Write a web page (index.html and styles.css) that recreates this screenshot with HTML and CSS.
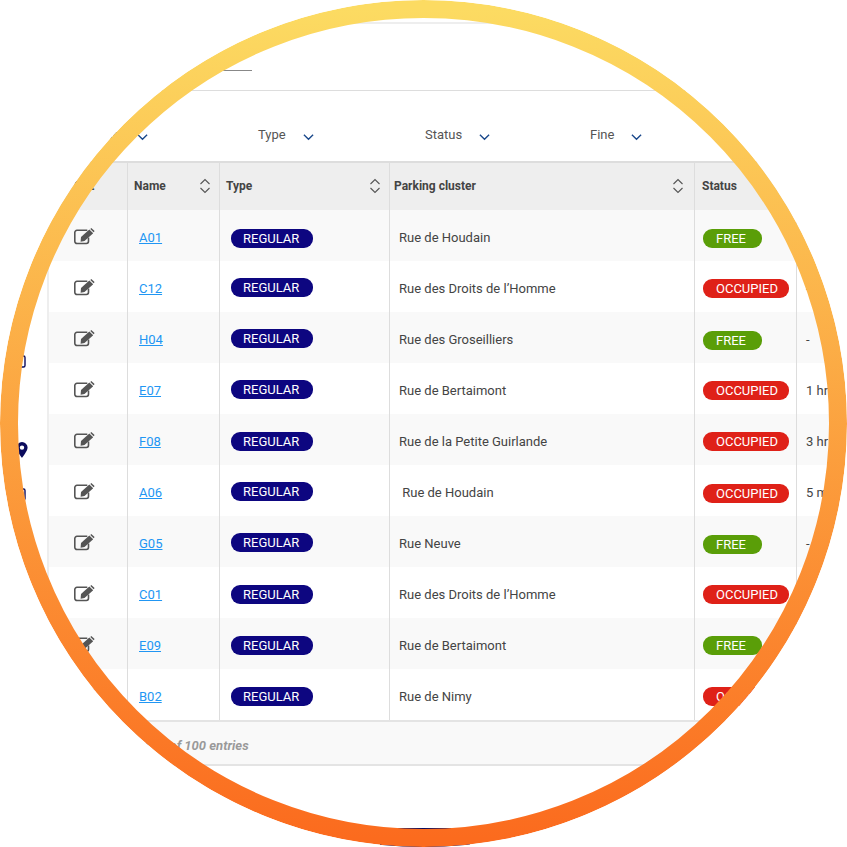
FILE: index.html
```html
<!DOCTYPE html>
<html lang="en">
<head>
  <meta charset="UTF-8" />
  <title>Parking spots</title>
  <link rel="stylesheet" href="styles.css">
</head>
<body>

  <div class="lens">
    <div class="app">

      <!-- Side menu -->
      <aside class="side-nav">
        <svg class="nav-icon nav-first" viewBox="0 0 12 14"><rect x="1" y="2" width="10" height="11" rx="1.5" fill="none" stroke="#0b0b5c" stroke-width="1.4"/><path d="M4 6h4M4 9h4" stroke="#0b0b5c" stroke-width="1.2"/></svg>
        <svg class="nav-icon nav-pin" viewBox="0 0 12 16"><path fill-rule="evenodd" fill="#0b0b5c" d="M6 0a5.6 5.6 0 0 0-5.6 5.6C.4 9.2 6 16 6 16s5.6-6.800 5.600-10.400A5.600 5.600 0 0 0 6 0zm0 3.400a2.200 2.200 0 1 1 0 4.400 2.200 2.200 0 0 1 0-4.400z"/></svg>
        <svg class="nav-icon nav-last" viewBox="0 0 12 14"><rect x="1" y="2" width="10" height="11" rx="1.5" fill="none" stroke="#0b0b5c" stroke-width="1.4"/></svg>
      </aside>

      <main class="content">
        <div class="top-line"></div>
        <div class="tabs"><span class="tab-active"></span></div>

        <div class="filters">
          <div class="filter">Name <svg class="chevron" viewBox="0 0 12 8"><path d="M1 1.500l5 5 5-5"/></svg></div>
          <div class="filter">Type <svg class="chevron" viewBox="0 0 12 8"><path d="M1 1.500l5 5 5-5"/></svg></div>
          <div class="filter">Status <svg class="chevron" viewBox="0 0 12 8"><path d="M1 1.500l5 5 5-5"/></svg></div>
          <div class="filter">Fine <svg class="chevron" viewBox="0 0 12 8"><path d="M1 1.500l5 5 5-5"/></svg></div>
        </div>

        <table class="spots">
          <colgroup>
            <col class="col-edit"><col class="col-name"><col class="col-type"><col class="col-cluster"><col class="col-status"><col class="col-time">
          </colgroup>
          <thead>
            <tr>
              <th class="th-edit">Edit</th>
              <th><div class="th-inner">Name <svg class="sort" viewBox="0 0 12 16"><path d="M1.500 6l4.500-4.500 4.500 4.500M1.500 10l4.500 4.500 4.500-4.500"/></svg></div></th>
              <th><div class="th-inner">Type <svg class="sort" viewBox="0 0 12 16"><path d="M1.500 6l4.500-4.500 4.500 4.500M1.500 10l4.500 4.500 4.500-4.500"/></svg></div></th>
              <th class="th-cluster"><div class="th-inner">Parking cluster <svg class="sort" viewBox="0 0 12 16"><path d="M1.500 6l4.500-4.500 4.500 4.500M1.500 10l4.500 4.500 4.500-4.500"/></svg></div></th>
              <th class="th-status"><div class="th-inner">Status</div></th>
              <th><div class="th-inner">Time</div></th>
            </tr>
          </thead>
          <tbody>
            <tr>
              <td class="td-edit"><svg class="edit" viewBox="0 0 21 17"><use href="#edit-icon"/></svg></td>
              <td class="td-name"><a href="#">A01</a></td>
              <td class="td-type"><span class="badge badge-regular badge-low">REGULAR</span></td>
              <td>Rue de Houdain</td>
              <td class="td-status"><span class="badge badge-free badge-low">FREE</span></td>
              <td>-</td>
            </tr>
            <tr>
              <td class="td-edit"><svg class="edit" viewBox="0 0 21 17"><use href="#edit-icon"/></svg></td>
              <td class="td-name"><a href="#">C12</a></td>
              <td class="td-type"><span class="badge badge-regular badge-high">REGULAR</span></td>
              <td>Rue des Droits de l’Homme</td>
              <td class="td-status"><span class="badge badge-occupied">OCCUPIED</span></td>
              <td>-</td>
            </tr>
            <tr>
              <td class="td-edit"><svg class="edit" viewBox="0 0 21 17"><use href="#edit-icon"/></svg></td>
              <td class="td-name"><a href="#">H04</a></td>
              <td class="td-type"><span class="badge badge-regular badge-high">REGULAR</span></td>
              <td>Rue des Groseilliers</td>
              <td class="td-status"><span class="badge badge-free badge-low">FREE</span></td>
              <td>-</td>
            </tr>
            <tr>
              <td class="td-edit"><svg class="edit" viewBox="0 0 21 17"><use href="#edit-icon"/></svg></td>
              <td class="td-name"><a href="#">E07</a></td>
              <td class="td-type"><span class="badge badge-regular badge-high">REGULAR</span></td>
              <td>Rue de Bertaimont</td>
              <td class="td-status"><span class="badge badge-occupied">OCCUPIED</span></td>
              <td>1 hr</td>
            </tr>
            <tr>
              <td class="td-edit"><svg class="edit" viewBox="0 0 21 17"><use href="#edit-icon"/></svg></td>
              <td class="td-name"><a href="#">F08</a></td>
              <td class="td-type"><span class="badge badge-regular">REGULAR</span></td>
              <td>Rue de la Petite Guirlande</td>
              <td class="td-status"><span class="badge badge-occupied">OCCUPIED</span></td>
              <td>3 hr</td>
            </tr>
            <tr>
              <td class="td-edit"><svg class="edit" viewBox="0 0 21 17"><use href="#edit-icon"/></svg></td>
              <td class="td-name"><a href="#">A06</a></td>
              <td class="td-type"><span class="badge badge-regular badge-high">REGULAR</span></td>
              <td>&nbsp;Rue de Houdain</td>
              <td class="td-status"><span class="badge badge-occupied badge-low">OCCUPIED</span></td>
              <td>5 min</td>
            </tr>
            <tr>
              <td class="td-edit"><svg class="edit" viewBox="0 0 21 17"><use href="#edit-icon"/></svg></td>
              <td class="td-name"><a href="#">G05</a></td>
              <td class="td-type"><span class="badge badge-regular badge-high">REGULAR</span></td>
              <td>Rue Neuve</td>
              <td class="td-status"><span class="badge badge-free badge-low">FREE</span></td>
              <td>-</td>
            </tr>
            <tr>
              <td class="td-edit"><svg class="edit" viewBox="0 0 21 17"><use href="#edit-icon"/></svg></td>
              <td class="td-name"><a href="#">C01</a></td>
              <td class="td-type"><span class="badge badge-regular">REGULAR</span></td>
              <td>Rue des Droits de l’Homme</td>
              <td class="td-status"><span class="badge badge-occupied">OCCUPIED</span></td>
              <td></td>
            </tr>
            <tr>
              <td class="td-edit"><svg class="edit" viewBox="0 0 21 17"><use href="#edit-icon"/></svg></td>
              <td class="td-name"><a href="#">E09</a></td>
              <td class="td-type"><span class="badge badge-regular">REGULAR</span></td>
              <td>Rue de Bertaimont</td>
              <td class="td-status"><span class="badge badge-free">FREE</span></td>
              <td></td>
            </tr>
            <tr>
              <td class="td-edit"><svg class="edit" viewBox="0 0 21 17"><use href="#edit-icon"/></svg></td>
              <td class="td-name"><a href="#">B02</a></td>
              <td class="td-type"><span class="badge badge-regular">REGULAR</span></td>
              <td>Rue de Nimy</td>
              <td class="td-status"><span class="badge badge-occupied">OCCUPIED</span></td>
              <td></td>
            </tr>
          </tbody>
        </table>

        <div class="table-footer">Showing 1 to 10 of 100 entries</div>
        <div class="pager"><span class="pager-btn"></span></div>
      </main>
    </div>

    <!-- Gradient ring on top of the page -->
    <svg class="ring" viewBox="0 0 847 847">
      <defs>
        <linearGradient id="ring-grad" x1="0" y1="0" x2="0" y2="1">
          <stop offset="0" stop-color="#fcdb62"/>
          <stop offset="1" stop-color="#fb6b1e"/>
        </linearGradient>
        <g id="edit-icon">
          <path d="M14.500 9.500v3.800a2.200 2.200 0 0 1-2.200 2.200H3a2.200 2.200 0 0 1-2.200-2.200V4.500A2.200 2.200 0 0 1 3 2.300h10.300" fill="none" stroke="#555" stroke-width="1.600"/>
          <path d="M7 9L15.300 1.600l3.900 3.600-8.700 7.900-3.900.6z" fill="#555"/>
          <path d="M16.300 .9l1-.9 3.300 3-1 1.200z" fill="#555"/>
        </g>
      </defs>
      <circle cx="423.500" cy="423.500" r="414.500" fill="none" stroke="url(#ring-grad)" stroke-width="18"/>
    </svg>
  </div>

</body>
</html>
```

FILE: styles.css
```css
* {
  margin: 0;
  padding: 0;
  box-sizing: border-box;
  font-family: 'Roboto', sans-serif;
}

body {
  background: white;
  color: #444;
}

.lens {
  position: relative;
  width: 847px;
  height: 847px;
  border-radius: 50%;
  overflow: hidden;
  background: white;
}

.ring {
  position: absolute;
  top: 0;
  left: 0;
  width: 847px;
  height: 847px;
}

.app {
  display: flex;
  width: 1100px;
}

/* Side menu */
.side-nav {
  width: 47px;
  display: flex;
  flex-direction: column;
  align-items: flex-end;
  padding-right: 19px;
  flex-shrink: 0;
}

.nav-icon {
  width: 12px;
  height: 14px;
}

.nav-first {
  margin: 354px 2px 0 0;
}

.nav-pin {
  height: 16px;
  margin-top: 74px;
}

.nav-last {
  margin: 29px 2px 0 0;
}

/* Top of the page */
.content {
  flex: 1;
  padding-top: 22px;
}

.top-line {
  height: 2px;
  background: #eee;
}

.tabs {
  height: 67px;
  border-bottom: 1px solid #ddd;
  padding: 45px 0 0 145px;
}

.tab-active {
  display: block;
  width: 60px;
  border-bottom: 1px solid #888;
  height: 2px;
}

.filters {
  display: grid;
  grid-template-columns: 173px 167px 165px 165px;
  height: 70px;
  padding: 36px 0 0 38px;
  font-size: 13px;
}

.filter {
  display: flex;
  align-items: flex-start;
  line-height: 16px;
  color: #555;
}

.chevron {
  width: 11px;
  height: 8px;
  margin: 6px 0 0 17px;
}

.chevron path {
  fill: none;
  stroke: #1c4a8c;
  stroke-width: 1.500;
}

/* Table */
.spots {
  width: 1000px;
  table-layout: fixed;
  border-collapse: separate;
  border-spacing: 0;
  border-left: 2px solid #eee;
  font-size: 13px;
}

.col-edit { width: 78px; }
.col-name { width: 92px; }
.col-type { width: 170px; }
.col-cluster { width: 305px; }
.col-status { width: 102px; }
.col-time { width: 253px; }

.spots th {
  height: 49px;
  background: #eee;
  border-top: 2px solid #ddd;
  border-left: 1px solid #ddd;
  font-size: 12px;
  font-weight: 700;
  text-align: left;
  padding: 0 8px 2px 6px;
  color: #444;
}

.spots .th-edit {
  border-left: none;
  text-align: center;
  padding-right: 14px;
}

.spots .th-cluster {
  padding: 0 10px 2px 4px;
}

.spots .th-status {
  padding-left: 7px;
}

.th-inner {
  display: flex;
  justify-content: space-between;
  align-items: center;
}

.sort {
  width: 12px;
  height: 16px;
}

.sort path {
  fill: none;
  stroke: #555;
  stroke-width: 1.100;
}

.spots td {
  height: 51px;
  border-left: 1px solid #ddd;
  padding: 4px 9px 0;
  white-space: nowrap;
  vertical-align: middle;
}

.spots tbody tr:nth-child(odd) {
  background: #f9f9f9;
}

.spots .td-edit {
  border-left: none;
  padding-left: 0;
  padding-right: 5px;
}

.edit {
  display: block;
  width: 21px;
  height: 17px;
  margin: -2px 0 0 25px;
}

.spots .td-name {
  padding-left: 11px;
}

.td-name a {
  color: #2196f3;
}

.spots .td-type {
  padding-left: 11px;
}

.spots .td-status {
  padding-left: 8px;
}

.badge {
  display: inline-block;
  height: 19px;
  line-height: 19px;
  border-radius: 9px;
  color: white;
  font-size: 13px;
  text-align: left;
  vertical-align: middle;
}

.badge-low {
  margin-top: 2px;
}

.badge-high {
  margin-bottom: 2px;
}

.badge-regular {
  width: 82px;
  padding-left: 12px;
  background: #0d0680;
}

.badge-free {
  width: 59px;
  padding-left: 13px;
  background: #5a9e08;
}

.badge-occupied {
  width: 86px;
  padding-left: 13px;
  background: #df2118;
}

.table-footer {
  width: 1000px;
  height: 46px;
  background: #f9f9f9;
  border-top: 2px solid #e4e4e4;
  border-bottom: 2px solid #e4e4e4;
  padding: 16px 0 0 28px;
  font-size: 13px;
  font-weight: 700;
  font-style: italic;
  color: #999;
}

.pager {
  padding: 62px 0 0 333px;
}

.pager-btn {
  display: block;
  width: 90px;
  height: 30px;
  background: #0b0b5c;
  border-radius: 4px;
}
```
